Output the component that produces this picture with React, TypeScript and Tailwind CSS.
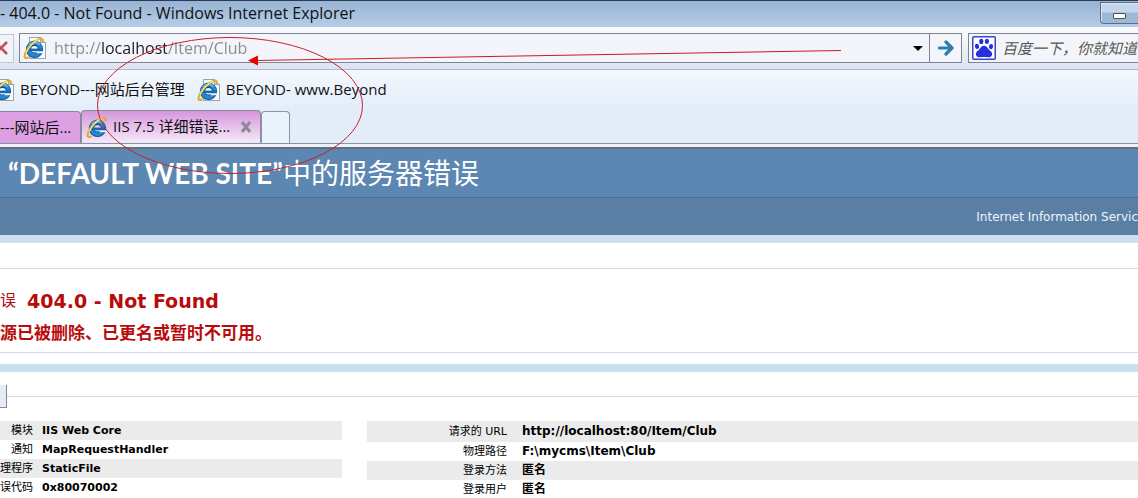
import React from "react";

function Globe() {
  return (
    <>
      <circle cx="11.500" cy="13.300" r="6" fill="none" stroke="#0f4f93" strokeWidth="5.400" />
      <circle cx="11.500" cy="13" r="6.200" fill="none" stroke="#2787cd" strokeWidth="3.600" />
      <path d="M6 9A7 7 0 0 1 16.500 8.600" fill="none" stroke="#5fbcea" strokeWidth="1.600" />
      <path d="M5.500 13.900h14.500" stroke="#1767ae" strokeWidth="2.600" />
      <path d="M13.500 15.300h7.500v1.900h-7.500z" fill="#eef4fb" />
      <path
        d="M4.8 21.500C1.600 23.200.6 20.800 2.600 16.600 5.200 11 11.400 4.600 16.400 2.900c2.600-.9 3.800.2 3.200 2.400"
        fill="none"
        stroke="#dfa92a"
        strokeWidth="2"
        strokeLinecap="round"
      />
      <path d="M3 17C5.400 11.400 11 5.200 16 3.400" fill="none" stroke="#fbe276" strokeWidth="1.200" />
    </>
  );
}

function PageIcon() {
  return (
    <svg viewBox="0 0 24 24" className="size-6 shrink-0" aria-hidden="true">
      <path d="M6.5 1.5h11l5 5v16h-16z" fill="#fbfcfd" stroke="#9aa3ab" />
      <path d="M17.5 1.5v5h5" fill="#e3e8ec" stroke="#9aa3ab" />
      <Globe />
    </svg>
  );
}

function ExplorerIcon() {
  return (
    <svg viewBox="0 0 22 24" className="h-6 w-[22px] shrink-0" aria-hidden="true">
      <Globe />
    </svg>
  );
}

function PawIcon() {
  return (
    <svg viewBox="0 0 24 24" className="size-6 shrink-0" aria-hidden="true">
      <rect x="0.75" y="0.75" width="22.5" height="22.5" rx="1" fill="#fff" stroke="#3a44d0" strokeWidth="1.5" />
      <g fill="#2530dc">
        <ellipse cx="5" cy="10.4" rx="2.100" ry="2.600" transform="rotate(-12 5 10.4)" />
        <ellipse cx="9.300" cy="5.400" rx="2.100" ry="2.700" />
        <ellipse cx="14.900" cy="5.400" rx="2.100" ry="2.700" transform="rotate(8 14.9 5.400)" />
        <ellipse cx="19" cy="10.600" rx="2.100" ry="2.600" transform="rotate(12 19 10.600)" />
        <path d="M12 9.800c2.600 0 3.300 2 4.800 3.600 1.700 1.700 3.700 2.500 3.300 5-.3 2-2 3.100-4.200 2.800-2.600-.4-5.200-.4-7.800 0-2.200.3-3.900-.8-4.200-2.800-.4-2.500 1.600-3.300 3.300-5C8.700 11.800 9.400 9.800 12 9.800z" />
      </g>
    </svg>
  );
}

function Annotation() {
  return (
    <svg className="pointer-events-none absolute left-0 top-0 h-[180px] w-[860px]" viewBox="0 0 860 180" aria-hidden="true">
      <ellipse cx="230" cy="105.5" rx="132.5" ry="68" fill="none" stroke="#c8202c" />
      <path d="M841 50.5L256 60.5" stroke="#d01820" />
      <path d="M248 60.5l10-5v10z" fill="#e60000" />
    </svg>
  );
}

type Row = { label: string; value: string };

const moduleRows: Row[] = [
  { label: "模块", value: "IIS Web Core" },
  { label: "通知", value: "MapRequestHandler" },
  { label: "理程序", value: "StaticFile" },
  { label: "误代码", value: "0x80070002" },
];

const requestRows: Row[] = [
  { label: "请求的 URL", value: "http://localhost:80/Item/Club" },
  { label: "物理路径", value: "F:\\mycms\\Item\\Club" },
  { label: "登录方法", value: "匿名" },
  { label: "登录用户", value: "匿名" },
];

function DetailTable({
  rows,
  rowClass,
  labelClass,
  valueClass,
}: {
  rows: Row[];
  rowClass: string;
  labelClass: string;
  valueClass: string;
}) {
  return (
    <table className="w-full border-collapse text-[11px] leading-[19px] text-black">
      <tbody>
        {rows.map((row) => (
          <tr key={row.label} className={`odd:bg-[#ebebeb] ${rowClass}`}>
            <th scope="row" className={`${labelClass} whitespace-nowrap p-0 text-right font-normal`}>
              {row.label}
            </th>
            <td className={`${valueClass} py-0 font-bold`}>{row.value}</td>
          </tr>
        ))}
      </tbody>
    </table>
  );
}

function Chrome() {
  return (
    <header className="font-['Open_Sans','Noto_Sans_CJK_SC',sans-serif] text-[15px] text-[#111]">
      <div className="flex h-[27px] items-start justify-between overflow-hidden border-t border-[#2b3a52] bg-linear-to-b from-[#98b3d3] to-[#b5cfe9]">
        <div className="whitespace-nowrap text-base leading-6">- 404.0 - Not Found - Windows Internet Explorer</div>
        <button
          aria-label="Minimize"
          className="mt-px flex h-[22px] w-[38px] items-center justify-center rounded-bl border border-r-0 border-[#5c6f8a] bg-linear-to-b from-[#c4d6ea] from-45% to-[#9fb8d4] to-50% pt-1.5 shadow-[inset_1px_1px_0_#dbe7f4]"
        >
          <span className="h-1.5 w-[13px] rounded-[1px] border border-[#4a5260] bg-white" />
        </button>
      </div>

      <div className="flex h-[42px] items-center overflow-hidden bg-linear-to-b from-[#fbfcfe] to-[#dde3f1]">
        <button aria-label="Stop" className="flex h-[29px] w-3.5 shrink-0 items-center overflow-hidden border border-l-0 border-[#c3c8d6] bg-[#f1f3fa]">
          <svg viewBox="0 0 10 16" className="h-4 w-2.5" aria-hidden="true">
            <path d="M-5 2L7 14M7 2L-5 14" stroke="#c5504c" strokeWidth="2.6" />
          </svg>
        </button>
        <form className="ml-[5px] flex h-[30px] min-w-0 flex-1 items-center border border-[#7d8496] bg-[#f4f5fb] pl-[3px]">
          <PageIcon />
          <input
            aria-label="Address"
            defaultValue="http://localhost/Item/Club"
            className="ml-[7px] h-7 min-w-0 flex-1 bg-[linear-gradient(to_right,#8a8a8a_47px,#1c1c1c_47px,#1c1c1c_113px,#8a8a8a_113px)] bg-clip-text text-base text-transparent caret-black outline-none"
          />
          <button type="button" aria-label="Show history" className="flex h-7 w-[22px] shrink-0 items-center justify-center">
            <svg viewBox="0 0 10 5" className="h-[5px] w-2.5" aria-hidden="true">
              <path d="M0 0h10L5 5z" fill="#000" />
            </svg>
          </button>
          <button type="submit" aria-label="Go" className="flex h-7 w-8 shrink-0 items-center justify-center border-l border-[#7d8496]">
            <svg viewBox="0 0 16 16" className="size-4" aria-hidden="true">
              <path d="M1.5 8H13M8 2l6 6-6 6" fill="none" stroke="#2b7fae" strokeWidth="3.2" strokeLinecap="round" strokeLinejoin="round" />
            </svg>
          </button>
        </form>
        <form className="ml-1.5 flex h-[30px] w-[170px] shrink-0 items-center border border-r-0 border-[#7d8496] bg-[#f4f5fb] pl-[3px]">
          <PawIcon />
          <input
            aria-label="Search"
            placeholder="百度一下，你就知道"
            className="ml-1.5 h-7 min-w-0 flex-1 italic outline-none placeholder:text-[#555]"
          />
        </form>
      </div>

      <nav className="flex h-10 items-center overflow-hidden border-t border-[#b2bac8] bg-linear-to-b from-[#f4f8fe] to-[#e3edf9]">
        <a href="#admin" className="-ml-[9px] flex items-center gap-[5px] whitespace-nowrap">
          <PageIcon />
          BEYOND---网站后台管理
        </a>
        <a href="#home" className="ml-3 flex items-center gap-[5px] whitespace-nowrap">
          <PageIcon />
          BEYOND- www.Beyond
        </a>
      </nav>

      <div className="flex h-[35px] items-end border-b border-[#8793a6] bg-[#e3edf9]">
        <button className="h-8 w-[81px] whitespace-nowrap rounded-tr border border-b-0 border-l-0 border-[#8c8799] bg-[#dda0e2] text-left">
          ---网站后...
        </button>
        <div className="flex h-[33px] w-[180px] items-center rounded-t border border-[#8c8799] border-b-[#e9e4f4] bg-linear-to-b from-[#d596dc] to-[#f4e8f8] pl-1">
          <ExplorerIcon />
          <button className="ml-[5px] whitespace-nowrap">IIS 7.5 详细错误...</button>
          <button aria-label="Close tab" className="ml-2.5">
            <svg viewBox="0 0 12 12" className="size-3" aria-hidden="true">
              <path d="M2 1l8 10M10 1L2 11" stroke="#8f8994" strokeWidth="3" />
            </svg>
          </button>
        </div>
        <button aria-label="New tab" className="h-8 w-[29px] rounded-t border border-b-0 border-[#8c94a2] bg-[#eaf2fb]" />
      </div>
      <div className="h-[5px] border-b-2 border-[#66707c] bg-[#eef1f5]" />
    </header>
  );
}

export default function App() {
  return (
    <div className="relative min-h-screen overflow-x-hidden bg-white font-['DejaVu_Sans','Noto_Sans_CJK_SC',sans-serif]">
      <Chrome />
      <main>
        <div className="h-[49px] overflow-hidden border-b border-[#486d96] bg-[#5c87b2] pl-2">
          <h1 className="whitespace-nowrap font-['Lato','Noto_Sans_CJK_SC',sans-serif] text-[28px] leading-[48px] text-white">
            <span className="font-bold">“DEFAULT WEB SITE”</span>中的服务器错误
          </h1>
        </div>
        <div className="flex h-[37px] items-center justify-end overflow-hidden bg-[#5a7fa5]">
          <p className="whitespace-nowrap text-xs text-[#eef4fa]">Internet Information Servic</p>
        </div>
        <div className="h-2 bg-[#cbe1ef]" />

        <section className="mt-[25px] h-[85px] border-y border-[#d3dce0] pt-[18px] text-[#b80c0c]">
          <h2 className="flex gap-[11px] whitespace-nowrap text-[19px] font-bold leading-7">
            <span className="text-base font-normal leading-7">误</span>
            <span>404.0 - Not Found</span>
          </h2>
          <h3 className="mt-1 whitespace-nowrap text-[17px] font-bold leading-7">源已被删除、已更名或暂时不可用。</h3>
        </section>

        <div className="mt-[11px] h-2 bg-[#cbe1ef]" />

        <section className="pt-[13px]">
          <div className="flex items-center">
            <div className="h-[23px] w-[7px] border-b border-r border-[#7f8a96] bg-[#e6ecf3]" />
            <div className="h-px flex-1 bg-[#d3dce0]" />
          </div>
          <div className="mt-[13px] flex items-start gap-[25px]">
            <div className="w-[342px] shrink-0">
              <DetailTable rows={moduleRows} rowClass="h-[19px]" labelClass="w-[33px]" valueClass="pl-[9px]" />
            </div>
            <div className="min-w-0 flex-1">
              <DetailTable
                rows={requestRows}
                rowClass="h-[19px] first:h-[21px]"
                labelClass="w-[140px]"
                valueClass="pl-[15px] text-xs leading-[19px]"
              />
            </div>
          </div>
        </section>
      </main>
      <Annotation />
    </div>
  );
}
